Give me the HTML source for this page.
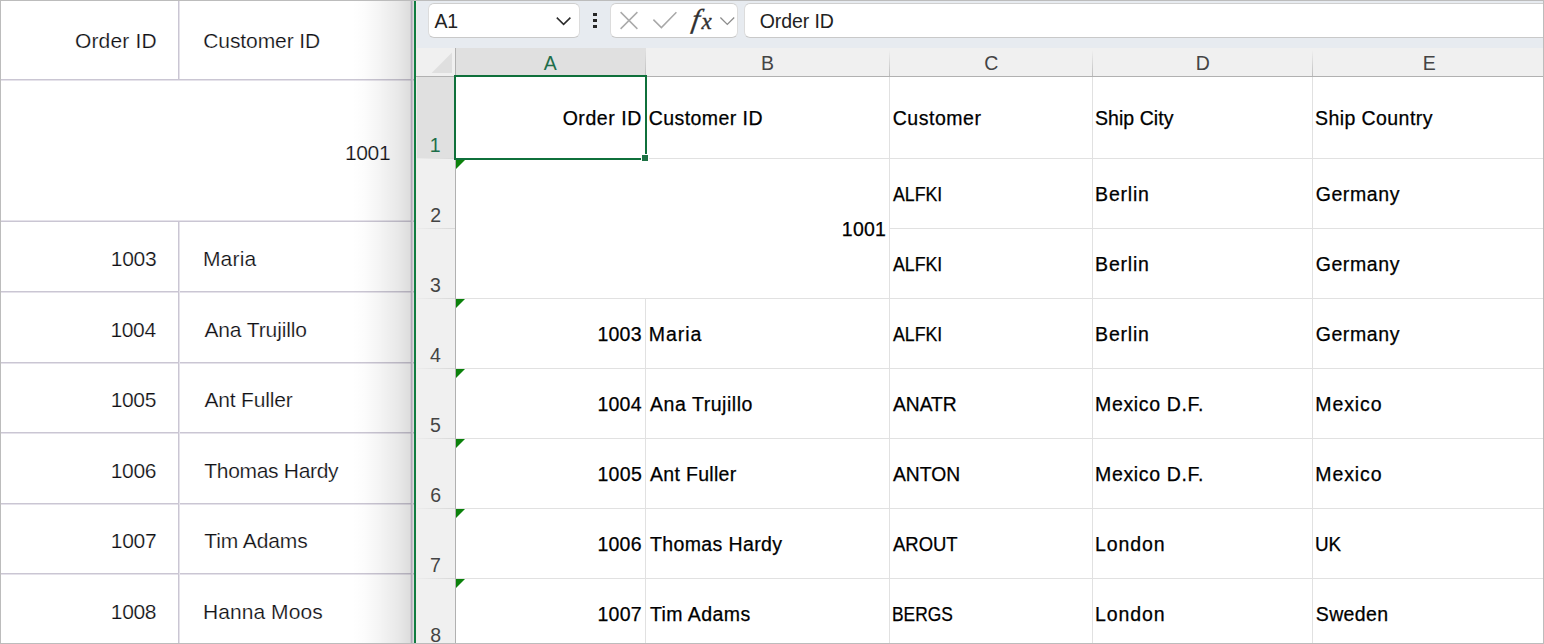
<!DOCTYPE html><html lang="en"><head><meta charset="utf-8"><title>Grid to Excel export</title><style>
html,body{margin:0;padding:0;background:#fff;}
body{width:1544px;height:644px;overflow:hidden;font-family:"Liberation Sans",sans-serif;}
#app{position:relative;width:1544px;height:644px;overflow:hidden;background:#fff;}
#app div,#app span,#app svg{position:absolute;}
.t{white-space:nowrap;line-height:1;}
.hs{height:1px;background:#cac6d3;left:1px;width:413px;}
.hl{height:1px;background:#e5e2ea;left:1px;width:413px;}
.xh{height:1px;background:#e1e1e1;}
.xv{width:1px;background:#e1e1e1;}
.box{background:#fff;border:1px solid #dcdcdc;border-top-color:#cfcfcf;border-bottom-color:#c9c9c9;border-radius:6px;box-sizing:border-box;}
.tri{width:0;height:0;border-top:9px solid #0b810b;border-right:9px solid transparent;left:456px;}
</style></head><body><div id="app">
<div id="grid" style="left:0;top:0;width:414px;height:644px;background:#fff">
<div class="hs" style="top:79px"></div><div class="hl" style="top:80px"></div>
<div class="hs" style="top:221px"></div><div class="hl" style="top:220px"></div>
<div class="hs" style="top:291px"></div><div class="hl" style="top:292px"></div>
<div class="hs" style="top:362px"></div><div class="hl" style="top:363px"></div>
<div class="hs" style="top:432px"></div><div class="hl" style="top:433px"></div>
<div class="hs" style="top:503px"></div><div class="hl" style="top:504px"></div>
<div class="hs" style="top:573px"></div><div class="hl" style="top:574px"></div>
<div style="left:178px;top:1px;width:1px;height:78px;background:#cac6d3"></div>
<div style="left:179px;top:1px;width:1px;height:78px;background:#e5e2ea"></div>
<div style="left:178px;top:222px;width:1px;height:422px;background:#cac6d3"></div>
<div style="left:179px;top:222px;width:1px;height:422px;background:#e5e2ea"></div>
</div>
<div id="shadow" style="left:352px;top:1px;width:62px;height:642px;background:linear-gradient(to right,rgba(0,0,0,0) 0%,rgba(0,0,0,0.01) 20%,rgba(0,0,0,0.045) 45%,rgba(0,0,0,0.09) 75%,rgba(0,0,0,0.135) 92%,rgba(0,0,0,0.14) 100%)"></div>
<div style="left:410px;top:1px;width:1px;height:642px;background:rgba(150,140,165,0.18)"></div>
<div style="left:411px;top:1px;width:1px;height:642px;background:#b0abb8"></div>
<div style="left:412px;top:1px;width:1px;height:642px;background:#c6c2cc"></div>
<div style="left:414px;top:1px;width:2px;height:642px;background:#107c41"></div>
<div id="excel" style="left:416px;top:0;width:1128px;height:644px;background:#fff">
<div style="left:0;top:0;width:1128px;height:48px;background:#e7ebf0"></div>
<div class="box" style="left:12px;top:3px;width:152px;height:35px"></div>
<svg style="left:136px;top:12px" width="24" height="18" viewBox="0 0 24 18"><path d="M4.8 5.6 L11.6 12.4 L18.4 5.6" fill="none" stroke="#2b2b2b" stroke-width="1.5"/></svg>
<div style="left:177.2px;top:13px;width:3.5px;height:3px;background:#262626"></div>
<div style="left:177.2px;top:19.3px;width:3.5px;height:3px;background:#262626"></div>
<div style="left:177.2px;top:25.3px;width:3.5px;height:3px;background:#262626"></div>
<div class="box" style="left:194px;top:3px;width:128px;height:35px"></div>
<svg style="left:200px;top:8px" width="26" height="26" viewBox="0 0 26 26"><path d="M4.6 4.1 L21.4 20.9 M21.4 4.1 L4.6 20.9" fill="none" stroke="#ababab" stroke-width="1.5"/></svg>
<svg style="left:234px;top:8px" width="30" height="26" viewBox="0 0 30 26"><path d="M3.4 11.6 L11.4 19.6 L26.4 4.2" fill="none" stroke="#a8a8a8" stroke-width="1.5"/></svg>
<span class="t" id="fx" style="left:272px;top:0;width:26px;height:40px;font-family:'Liberation Serif',serif;font-style:italic;color:#303030;-webkit-text-stroke:0.35px #303030"><span id="fxf" style="left:2px;top:5px;font-size:27.5px;line-height:1;transform:skewX(-9deg);transform-origin:0 100%">f</span><span id="fxx" style="left:13.5px;top:10px;font-size:23px;line-height:1">x</span></span>
<svg style="left:300px;top:12px" width="24" height="18" viewBox="0 0 24 18"><path d="M4.4 5.5 L11.3 12.4 L18.2 5.5" fill="none" stroke="#8c8c8c" stroke-width="1.3"/></svg>
<div class="box" style="left:328px;top:3px;width:830px;height:35px"></div>
<div style="left:0;top:48px;width:1128px;height:28px;background:#f0f0f0"></div>
<div style="left:40px;top:48px;width:190px;height:28px;background:#e0e0e0"></div>
<svg style="left:14px;top:51px" width="24" height="24" viewBox="0 0 24 24"><path d="M22 1.6 L22 22 L1.6 22 Z" fill="#dfdfdf"/></svg>
<div style="left:0;top:77px;width:39px;height:567px;background:#f0f0f0"></div>
<div style="left:0;top:77px;width:39px;height:81px;background:#e0e0e0"></div>
<div style="left:0;top:1px;width:1px;height:642px;background:#f3ecec"></div>
<div style="left:0;top:76px;width:1128px;height:1px;background:#b1b1b1"></div>
<div style="left:39px;top:48px;width:1px;height:596px;background:#b1b1b1"></div>
<div style="left:229px;top:50px;width:1px;height:26px;background:linear-gradient(to bottom,rgba(190,190,190,0),rgba(190,190,190,1))"></div>
<div style="left:473px;top:50px;width:1px;height:26px;background:linear-gradient(to bottom,rgba(190,190,190,0),rgba(190,190,190,1))"></div>
<div style="left:676px;top:50px;width:1px;height:26px;background:linear-gradient(to bottom,rgba(190,190,190,0),rgba(190,190,190,1))"></div>
<div style="left:896px;top:50px;width:1px;height:26px;background:linear-gradient(to bottom,rgba(190,190,190,0),rgba(190,190,190,1))"></div>
<div style="left:1px;top:158px;width:38px;height:1px;background:linear-gradient(to right,#ececec,#d8d8d8)"></div>
<div style="left:1px;top:228px;width:38px;height:1px;background:linear-gradient(to right,#ececec,#d8d8d8)"></div>
<div style="left:1px;top:298px;width:38px;height:1px;background:linear-gradient(to right,#ececec,#d8d8d8)"></div>
<div style="left:1px;top:368px;width:38px;height:1px;background:linear-gradient(to right,#ececec,#d8d8d8)"></div>
<div style="left:1px;top:438px;width:38px;height:1px;background:linear-gradient(to right,#ececec,#d8d8d8)"></div>
<div style="left:1px;top:508px;width:38px;height:1px;background:linear-gradient(to right,#ececec,#d8d8d8)"></div>
<div style="left:1px;top:578px;width:38px;height:1px;background:linear-gradient(to right,#ececec,#d8d8d8)"></div>
<div class="xh" style="left:40px;top:158px;width:1088px"></div>
<div class="xh" style="left:40px;top:298px;width:1088px"></div>
<div class="xh" style="left:40px;top:368px;width:1088px"></div>
<div class="xh" style="left:40px;top:438px;width:1088px"></div>
<div class="xh" style="left:40px;top:508px;width:1088px"></div>
<div class="xh" style="left:40px;top:578px;width:1088px"></div>
<div class="xh" style="left:473px;top:228px;width:655px"></div>
<div class="xv" style="left:473px;top:77px;height:567px"></div>
<div class="xv" style="left:676px;top:77px;height:567px"></div>
<div class="xv" style="left:896px;top:77px;height:567px"></div>
<div class="xv" style="left:229px;top:77px;height:82px"></div>
<div class="xv" style="left:229px;top:299px;height:345px"></div>
<div class="tri" style="left:40px;top:160px"></div>
<div class="tri" style="left:40px;top:299px"></div>
<div class="tri" style="left:40px;top:369px"></div>
<div class="tri" style="left:40px;top:439px"></div>
<div class="tri" style="left:40px;top:509px"></div>
<div class="tri" style="left:40px;top:579px"></div>
<div style="left:38px;top:75px;width:189px;height:81px;border:2px solid #0f703b"></div>
<div style="left:225px;top:154px;width:6px;height:6px;background:#1d7244;border:1px solid #fff"></div>
</div>
<span class="t" id="t0" style="left:74.92px;top:30px;font-size:21px;letter-spacing:0.169px;color:#121216;-webkit-text-stroke:0.2px #fff;">Order ID</span>
<span class="t" id="t1" style="left:203.27px;top:30px;font-size:21px;letter-spacing:-0.090px;color:#121216;-webkit-text-stroke:0.2px #fff;">Customer ID</span>
<span class="t" id="t2" style="left:344.90px;top:142px;font-size:21px;letter-spacing:-0.330px;color:#121216;-webkit-text-stroke:0.2px #fbfbfb;">1001</span>
<span class="t" id="t3" style="left:110.84px;top:248px;font-size:21px;letter-spacing:-0.330px;color:#121216;-webkit-text-stroke:0.2px #fff;">1003</span>
<span class="t" id="t4" style="left:202.91px;top:248px;font-size:21px;letter-spacing:0.218px;color:#121216;-webkit-text-stroke:0.2px #fff;">Maria</span>
<span class="t" id="t5" style="left:110.38px;top:319px;font-size:21px;letter-spacing:-0.330px;color:#121216;-webkit-text-stroke:0.2px #fff;">1004</span>
<span class="t" id="t6" style="left:204.43px;top:319px;font-size:21px;letter-spacing:-0.118px;color:#121216;-webkit-text-stroke:0.2px #fff;">Ana Trujillo</span>
<span class="t" id="t7" style="left:110.65px;top:389px;font-size:21px;letter-spacing:-0.330px;color:#121216;-webkit-text-stroke:0.2px #fff;">1005</span>
<span class="t" id="t8" style="left:204.43px;top:389px;font-size:21px;letter-spacing:-0.163px;color:#121216;-webkit-text-stroke:0.2px #fff;">Ant Fuller</span>
<span class="t" id="t9" style="left:110.75px;top:460px;font-size:21px;letter-spacing:-0.330px;color:#121216;-webkit-text-stroke:0.2px #fff;">1006</span>
<span class="t" id="t10" style="left:204.27px;top:460px;font-size:21px;letter-spacing:-0.311px;color:#121216;-webkit-text-stroke:0.2px #fff;">Thomas Hardy</span>
<span class="t" id="t11" style="left:110.84px;top:530px;font-size:21px;letter-spacing:-0.330px;color:#121216;-webkit-text-stroke:0.2px #fff;">1007</span>
<span class="t" id="t12" style="left:204.27px;top:530px;font-size:21px;letter-spacing:-0.094px;color:#121216;-webkit-text-stroke:0.2px #fff;">Tim Adams</span>
<span class="t" id="t13" style="left:110.81px;top:601px;font-size:21px;letter-spacing:-0.330px;color:#121216;-webkit-text-stroke:0.2px #fff;">1008</span>
<span class="t" id="t14" style="left:202.91px;top:601px;font-size:21px;letter-spacing:0.073px;color:#121216;-webkit-text-stroke:0.2px #fff;">Hanna Moos</span>
<span class="t" id="t15" style="left:434.39px;top:12px;font-size:19.5px;letter-spacing:-0.163px;color:#222;">A1</span>
<span class="t" id="t16" style="left:759.63px;top:12px;font-size:19.5px;letter-spacing:-0.067px;color:#222;">Order ID</span>
<span class="t" id="t17" style="left:543.64px;top:54px;font-size:19.5px;color:#1e6e4a;">A</span>
<span class="t" id="t18" style="left:761.01px;top:54px;font-size:19.5px;color:#444444;">B</span>
<span class="t" id="t19" style="left:984.16px;top:54px;font-size:19.5px;color:#444444;">C</span>
<span class="t" id="t20" style="left:1195.76px;top:54px;font-size:19.5px;color:#444444;">D</span>
<span class="t" id="t21" style="left:1422.77px;top:54px;font-size:19.5px;color:#444444;">E</span>
<span class="t" id="t22" style="left:429.77px;top:136px;font-size:19.5px;color:#1e6e4a;">1</span>
<span class="t" id="t23" style="left:430.21px;top:206px;font-size:19.5px;color:#444444;">2</span>
<span class="t" id="t24" style="left:430.07px;top:276px;font-size:19.5px;color:#444444;">3</span>
<span class="t" id="t25" style="left:430.09px;top:346px;font-size:19.5px;color:#444444;">4</span>
<span class="t" id="t26" style="left:430.01px;top:416px;font-size:19.5px;color:#444444;">5</span>
<span class="t" id="t27" style="left:430.21px;top:486px;font-size:19.5px;color:#444444;">6</span>
<span class="t" id="t28" style="left:430.09px;top:556px;font-size:19.5px;color:#444444;">7</span>
<span class="t" id="t29" style="left:430.18px;top:626px;font-size:19.5px;color:#444444;">8</span>
<span class="t" id="t30" style="left:562.65px;top:109px;font-size:19.5px;letter-spacing:0.555px;color:#000000;-webkit-text-stroke:0.25px #000;">Order ID</span>
<span class="t" id="t31" style="left:648.63px;top:109px;font-size:19.5px;letter-spacing:0.442px;color:#000000;-webkit-text-stroke:0.25px #000;">Customer ID</span>
<span class="t" id="t32" style="left:892.63px;top:109px;font-size:19.5px;letter-spacing:0.544px;color:#000000;-webkit-text-stroke:0.25px #000;">Customer</span>
<span class="t" id="t33" style="left:1094.98px;top:109px;font-size:19.5px;letter-spacing:0.048px;color:#000000;-webkit-text-stroke:0.25px #000;">Ship City</span>
<span class="t" id="t34" style="left:1314.98px;top:109px;font-size:19.5px;letter-spacing:0.428px;color:#000000;-webkit-text-stroke:0.25px #000;">Ship Country</span>
<span class="t" id="t35" style="left:841.79px;top:220px;font-size:19.5px;letter-spacing:0.267px;color:#000000;-webkit-text-stroke:0.25px #000;">1001</span>
<span class="t" id="t36" style="left:893.08px;top:185px;font-size:19.5px;color:#000000;-webkit-text-stroke:0.25px #000;transform:scaleX(0.9094);transform-origin:0 0;">ALFKI</span>
<span class="t" id="t37" style="left:1095.10px;top:185px;font-size:19.5px;letter-spacing:0.780px;color:#000000;-webkit-text-stroke:0.25px #000;">Berlin</span>
<span class="t" id="t38" style="left:1315.63px;top:185px;font-size:19.5px;letter-spacing:0.600px;color:#000000;-webkit-text-stroke:0.25px #000;">Germany</span>
<span class="t" id="t39" style="left:893.08px;top:255px;font-size:19.5px;color:#000000;-webkit-text-stroke:0.25px #000;transform:scaleX(0.9094);transform-origin:0 0;">ALFKI</span>
<span class="t" id="t40" style="left:1095.10px;top:255px;font-size:19.5px;letter-spacing:0.780px;color:#000000;-webkit-text-stroke:0.25px #000;">Berlin</span>
<span class="t" id="t41" style="left:1315.63px;top:255px;font-size:19.5px;letter-spacing:0.600px;color:#000000;-webkit-text-stroke:0.25px #000;">Germany</span>
<span class="t" id="t42" style="left:893.08px;top:325px;font-size:19.5px;color:#000000;-webkit-text-stroke:0.25px #000;transform:scaleX(0.9094);transform-origin:0 0;">ALFKI</span>
<span class="t" id="t43" style="left:1095.10px;top:325px;font-size:19.5px;letter-spacing:0.780px;color:#000000;-webkit-text-stroke:0.25px #000;">Berlin</span>
<span class="t" id="t44" style="left:1315.63px;top:325px;font-size:19.5px;letter-spacing:0.600px;color:#000000;-webkit-text-stroke:0.25px #000;">Germany</span>
<span class="t" id="t45" style="left:597.43px;top:325px;font-size:19.5px;letter-spacing:0.229px;color:#000000;-webkit-text-stroke:0.25px #000;">1003</span>
<span class="t" id="t46" style="left:648.66px;top:325px;font-size:19.5px;letter-spacing:0.990px;color:#000000;-webkit-text-stroke:0.25px #000;">Maria</span>
<span class="t" id="t47" style="left:597.43px;top:395px;font-size:19.5px;letter-spacing:0.234px;color:#000000;-webkit-text-stroke:0.25px #000;">1004</span>
<span class="t" id="t48" style="left:650.00px;top:395px;font-size:19.5px;letter-spacing:0.544px;color:#000000;-webkit-text-stroke:0.25px #000;">Ana Trujillo</span>
<span class="t" id="t49" style="left:893.16px;top:395px;font-size:19.5px;color:#000000;-webkit-text-stroke:0.25px #000;transform:scaleX(0.9861);transform-origin:0 0;">ANATR</span>
<span class="t" id="t50" style="left:1095.10px;top:395px;font-size:19.5px;letter-spacing:0.641px;color:#000000;-webkit-text-stroke:0.25px #000;">Mexico D.F.</span>
<span class="t" id="t51" style="left:1315.31px;top:395px;font-size:19.5px;letter-spacing:0.896px;color:#000000;-webkit-text-stroke:0.25px #000;">Mexico</span>
<span class="t" id="t52" style="left:597.43px;top:465px;font-size:19.5px;letter-spacing:0.337px;color:#000000;-webkit-text-stroke:0.25px #000;">1005</span>
<span class="t" id="t53" style="left:650.00px;top:465px;font-size:19.5px;letter-spacing:0.312px;color:#000000;-webkit-text-stroke:0.25px #000;">Ant Fuller</span>
<span class="t" id="t54" style="left:893.16px;top:465px;font-size:19.5px;color:#000000;-webkit-text-stroke:0.25px #000;transform:scaleX(0.9890);transform-origin:0 0;">ANTON</span>
<span class="t" id="t55" style="left:1095.10px;top:465px;font-size:19.5px;letter-spacing:0.641px;color:#000000;-webkit-text-stroke:0.25px #000;">Mexico D.F.</span>
<span class="t" id="t56" style="left:1315.31px;top:465px;font-size:19.5px;letter-spacing:0.896px;color:#000000;-webkit-text-stroke:0.25px #000;">Mexico</span>
<span class="t" id="t57" style="left:597.43px;top:535px;font-size:19.5px;letter-spacing:0.244px;color:#000000;-webkit-text-stroke:0.25px #000;">1006</span>
<span class="t" id="t58" style="left:649.91px;top:535px;font-size:19.5px;letter-spacing:0.388px;color:#000000;-webkit-text-stroke:0.25px #000;">Thomas Hardy</span>
<span class="t" id="t59" style="left:893.08px;top:535px;font-size:19.5px;color:#000000;-webkit-text-stroke:0.25px #000;transform:scaleX(0.9471);transform-origin:0 0;">AROUT</span>
<span class="t" id="t60" style="left:1095.10px;top:535px;font-size:19.5px;letter-spacing:0.909px;color:#000000;-webkit-text-stroke:0.25px #000;">London</span>
<span class="t" id="t61" style="left:1315.47px;top:535px;font-size:19.5px;color:#000000;-webkit-text-stroke:0.25px #000;transform:scaleX(0.9669);transform-origin:0 0;">UK</span>
<span class="t" id="t62" style="left:597.43px;top:605px;font-size:19.5px;letter-spacing:0.270px;color:#000000;-webkit-text-stroke:0.25px #000;">1007</span>
<span class="t" id="t63" style="left:649.91px;top:605px;font-size:19.5px;letter-spacing:0.451px;color:#000000;-webkit-text-stroke:0.25px #000;">Tim Adams</span>
<span class="t" id="t64" style="left:892.14px;top:605px;font-size:19.5px;color:#000000;-webkit-text-stroke:0.25px #000;transform:scaleX(0.8895);transform-origin:0 0;">BERGS</span>
<span class="t" id="t65" style="left:1095.10px;top:605px;font-size:19.5px;letter-spacing:0.909px;color:#000000;-webkit-text-stroke:0.25px #000;">London</span>
<span class="t" id="t66" style="left:1315.75px;top:605px;font-size:19.5px;letter-spacing:0.379px;color:#000000;-webkit-text-stroke:0.25px #000;">Sweden</span>
<div style="left:0;top:0;width:1542px;height:642px;border:1px solid #bcbcbc;pointer-events:none"></div>
</div></body></html>
